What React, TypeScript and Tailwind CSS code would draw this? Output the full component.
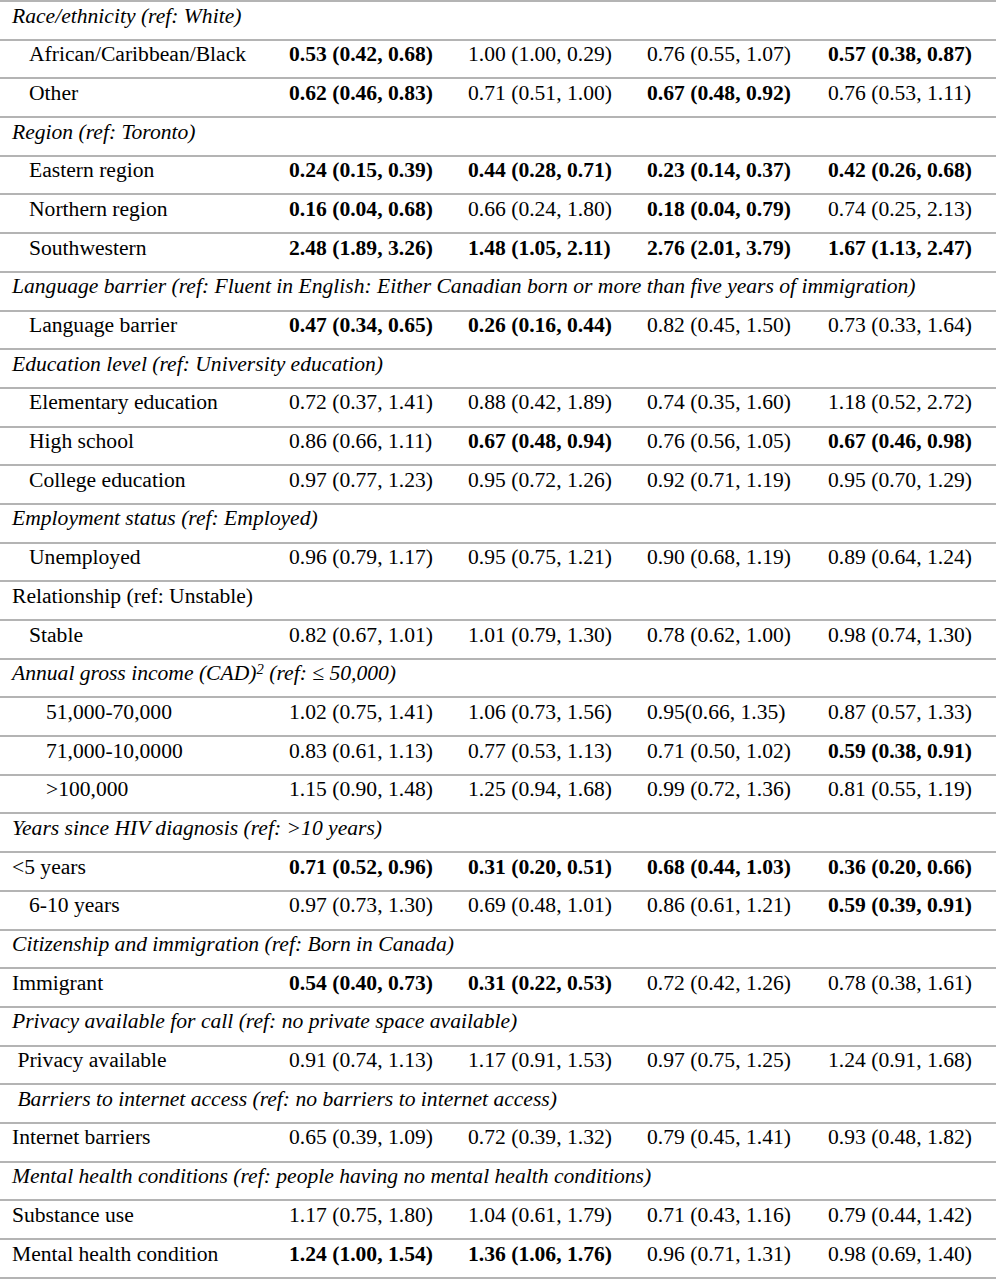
import React from "react";

type Cell = { t: string; b?: boolean };
type Row =
  | { kind: "h"; label: React.ReactNode; italic?: boolean }
  | { kind: "d"; label: string; indent: number; cells: Cell[] };

const B = (t: string): Cell => ({ t, b: true });
const N = (t: string): Cell => ({ t });

const rows: Row[] = [
  { kind: "h", label: "Race/ethnicity (ref: White)", italic: true },
  { kind: "d", label: "African/Caribbean/Black", indent: 29, cells: [B("0.53 (0.42, 0.68)"), N("1.00 (1.00, 0.29)"), N("0.76 (0.55, 1.07)"), B("0.57 (0.38, 0.87)")] },
  { kind: "d", label: "Other", indent: 29, cells: [B("0.62 (0.46, 0.83)"), N("0.71 (0.51, 1.00)"), B("0.67 (0.48, 0.92)"), N("0.76 (0.53, 1.11)")] },
  { kind: "h", label: "Region (ref: Toronto)", italic: true },
  { kind: "d", label: "Eastern region", indent: 29, cells: [B("0.24 (0.15, 0.39)"), B("0.44 (0.28, 0.71)"), B("0.23 (0.14, 0.37)"), B("0.42 (0.26, 0.68)")] },
  { kind: "d", label: "Northern region", indent: 29, cells: [B("0.16 (0.04, 0.68)"), N("0.66 (0.24, 1.80)"), B("0.18 (0.04, 0.79)"), N("0.74 (0.25, 2.13)")] },
  { kind: "d", label: "Southwestern", indent: 29, cells: [B("2.48 (1.89, 3.26)"), B("1.48 (1.05, 2.11)"), B("2.76 (2.01, 3.79)"), B("1.67 (1.13, 2.47)")] },
  { kind: "h", label: "Language barrier (ref: Fluent in English: Either Canadian born or more than five years of immigration)", italic: true },
  { kind: "d", label: "Language barrier", indent: 29, cells: [B("0.47 (0.34, 0.65)"), B("0.26 (0.16, 0.44)"), N("0.82 (0.45, 1.50)"), N("0.73 (0.33, 1.64)")] },
  { kind: "h", label: "Education level (ref: University education)", italic: true },
  { kind: "d", label: "Elementary education", indent: 29, cells: [N("0.72 (0.37, 1.41)"), N("0.88 (0.42, 1.89)"), N("0.74 (0.35, 1.60)"), N("1.18 (0.52, 2.72)")] },
  { kind: "d", label: "High school", indent: 29, cells: [N("0.86 (0.66, 1.11)"), B("0.67 (0.48, 0.94)"), N("0.76 (0.56, 1.05)"), B("0.67 (0.46, 0.98)")] },
  { kind: "d", label: "College education", indent: 29, cells: [N("0.97 (0.77, 1.23)"), N("0.95 (0.72, 1.26)"), N("0.92 (0.71, 1.19)"), N("0.95 (0.70, 1.29)")] },
  { kind: "h", label: "Employment status (ref: Employed)", italic: true },
  { kind: "d", label: "Unemployed", indent: 29, cells: [N("0.96 (0.79, 1.17)"), N("0.95 (0.75, 1.21)"), N("0.90 (0.68, 1.19)"), N("0.89 (0.64, 1.24)")] },
  { kind: "h", label: "Relationship (ref: Unstable)", italic: false },
  { kind: "d", label: "Stable", indent: 29, cells: [N("0.82 (0.67, 1.01)"), N("1.01 (0.79, 1.30)"), N("0.78 (0.62, 1.00)"), N("0.98 (0.74, 1.30)")] },
  {
    kind: "h",
    label: (
      <>
        Annual gross income (CAD)<sup className="text-[0.68em] relative -top-[0.4em] align-baseline">2</sup> (ref: ≤ 50,000)
      </>
    ),
    italic: true,
  },
  { kind: "d", label: "51,000-70,000", indent: 46, cells: [N("1.02 (0.75, 1.41)"), N("1.06 (0.73, 1.56)"), N("0.95(0.66, 1.35)"), N("0.87 (0.57, 1.33)")] },
  { kind: "d", label: "71,000-10,0000", indent: 46, cells: [N("0.83 (0.61, 1.13)"), N("0.77 (0.53, 1.13)"), N("0.71 (0.50, 1.02)"), B("0.59 (0.38, 0.91)")] },
  { kind: "d", label: ">100,000", indent: 46, cells: [N("1.15 (0.90, 1.48)"), N("1.25 (0.94, 1.68)"), N("0.99 (0.72, 1.36)"), N("0.81 (0.55, 1.19)")] },
  { kind: "h", label: "Years since HIV diagnosis (ref: >10 years)", italic: true },
  { kind: "d", label: "<5 years", indent: 12, cells: [B("0.71 (0.52, 0.96)"), B("0.31 (0.20, 0.51)"), B("0.68 (0.44, 1.03)"), B("0.36 (0.20, 0.66)")] },
  { kind: "d", label: "6-10 years", indent: 29, cells: [N("0.97 (0.73, 1.30)"), N("0.69 (0.48, 1.01)"), N("0.86 (0.61, 1.21)"), B("0.59 (0.39, 0.91)")] },
  { kind: "h", label: "Citizenship and immigration (ref: Born in Canada)", italic: true },
  { kind: "d", label: "Immigrant", indent: 12, cells: [B("0.54 (0.40, 0.73)"), B("0.31 (0.22, 0.53)"), N("0.72 (0.42, 1.26)"), N("0.78 (0.38, 1.61)")] },
  { kind: "h", label: "Privacy available for call (ref: no private space available)", italic: true },
  { kind: "d", label: "\u00a0Privacy available", indent: 12, cells: [N("0.91 (0.74, 1.13)"), N("1.17 (0.91, 1.53)"), N("0.97 (0.75, 1.25)"), N("1.24 (0.91, 1.68)")] },
  { kind: "h", label: "\u00a0Barriers to internet access (ref: no barriers to internet access)", italic: true },
  { kind: "d", label: "Internet barriers", indent: 12, cells: [N("0.65 (0.39, 1.09)"), N("0.72 (0.39, 1.32)"), N("0.79 (0.45, 1.41)"), N("0.93 (0.48, 1.82)")] },
  { kind: "h", label: "Mental health conditions (ref: people having no mental health conditions)", italic: true },
  { kind: "d", label: "Substance use", indent: 12, cells: [N("1.17 (0.75, 1.80)"), N("1.04 (0.61, 1.79)"), N("0.71 (0.43, 1.16)"), N("0.79 (0.44, 1.42)")] },
  { kind: "d", label: "Mental health condition", indent: 12, cells: [B("1.24 (1.00, 1.54)"), B("1.36 (1.06, 1.76)"), N("0.96 (0.71, 1.31)"), N("0.98 (0.69, 1.40)")] },
];

export default function App() {
  return (
    <div
      className="w-[998px] bg-white text-black text-[21.6px] leading-none"
      style={{ fontFamily: '"Liberation Serif", "Times New Roman", serif' }}
    >
      <div className="border-b-2 border-[#b4b4b4] mr-[2px]">
        {rows.map((r, i) =>
          r.kind === "h" ? (
            <div
              key={i}
              className={`h-[38.7px] border-t-2 border-[#b4b4b4] flex items-center pl-[12px] pb-[8px] whitespace-nowrap ${r.italic ? "italic" : ""}`}
            >
              <span>{r.label}</span>
            </div>
          ) : (
            <div
              key={i}
              className="h-[38.7px] border-t-2 border-[#b4b4b4] grid grid-cols-[289px_179px_179px_181px_1fr] items-center pb-[8px] whitespace-nowrap"
            >
              <span style={{ paddingLeft: r.indent }}>{r.label}</span>
              {r.cells.map((c, j) => (
                <span key={j} className={c.b ? "font-bold" : ""}>
                  {c.t}
                </span>
              ))}
            </div>
          )
        )}
      </div>
    </div>
  );
}
